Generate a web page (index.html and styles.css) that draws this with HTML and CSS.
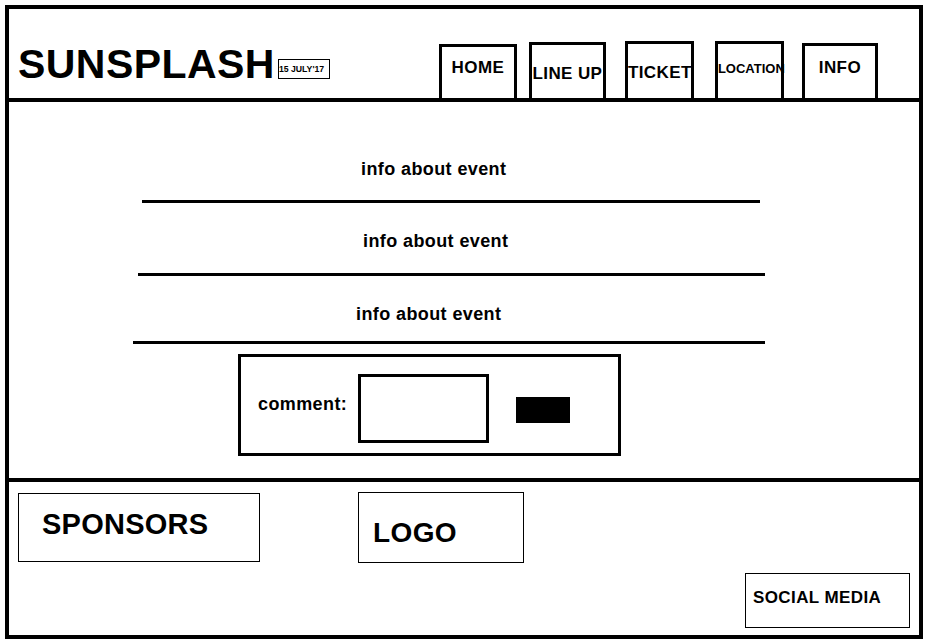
FILE: index.html
```html
<!doctype html>
<html lang="en">
    <head>
        <meta charset="utf-8">
        <title>Sunsplash</title>
        <meta name="viewport" content="width=device-width, initial-scale=1">
        <link rel="stylesheet" href="styles.css">
    </head>
    <body>
        <div class="frame">
            <header class="header">
                <div class="brand">
                    <h1 class="brand-title">SUNSPLASH</h1>
                    <div class="brand-date">15 JULY'17</div>
                </div>

                <nav class="nav">
                    <a class="nav-item nav-home" href="#">HOME</a>
                    <a class="nav-item nav-lineup" href="#">LINE UP</a>
                    <a class="nav-item nav-ticket" href="#">TICKET</a>
                    <a class="nav-item nav-location" href="#">LOCATION</a>
                    <a class="nav-item nav-info" href="#">INFO</a>
                </nav>
            </header>

            <main class="main">
                <section class="info info-1">
                    <p class="info-text">info about event</p>
                    <div class="info-rule"></div>
                </section>

                <section class="info info-2">
                    <p class="info-text">info about event</p>
                    <div class="info-rule"></div>
                </section>

                <section class="info info-3">
                    <p class="info-text">info about event</p>
                    <div class="info-rule"></div>
                </section>

                <form class="comment">
                    <label class="comment-label" for="comment">comment:</label>
                    <textarea class="comment-input" id="comment"></textarea>
                    <button class="comment-send" type="button"></button>
                </form>
            </main>

            <footer class="footer">
                <div class="footer-row">
                    <div class="sponsors">SPONSORS</div>
                    <div class="logo">LOGO</div>
                </div>
                <div class="social">SOCIAL MEDIA</div>
            </footer>
        </div>
    </body>
</html>
```

FILE: styles.css
```css
* {
    box-sizing: border-box;
}

body {
    margin: 0;
    background-color: #fff;
    color: #000;
    font-family: "Liberation Sans", Arial, sans-serif;
    font-weight: bold;
    letter-spacing: 0.4px;
}

.frame {
    display: flex;
    flex-direction: column;
    width: 918px;
    height: 634px;
    margin: 5px 0 0 5px;
    border: 4px solid #000;
}

/* header */

.header {
    display: flex;
    align-items: flex-end;
    height: 93px;
    border-bottom: 4px solid #000;
}

.brand {
    display: flex;
    align-items: flex-end;
    margin: 0 0 13px 9px;
}

.brand-title {
    margin: 0;
    font-size: 41px;
    line-height: 41px;
    letter-spacing: 0.45px;
}

.brand-date {
    display: flex;
    align-items: center;
    width: 52px;
    height: 20px;
    margin: 0 0 6px 3px;
    border: 1px solid #000;
    font-size: 8.7px;
    letter-spacing: 0;
    white-space: nowrap;
}

.nav {
    display: flex;
    align-items: flex-end;
    margin-left: 109px;
}

.nav-item {
    display: block;
    border: 3px solid #000;
    border-bottom: 0;
    color: #000;
    text-decoration: none;
    text-align: center;
    font-size: 17px;
    line-height: 20px;
    white-space: nowrap;
}

.nav-home {
    width: 78px;
    height: 54px;
    padding-top: 11px;
    margin-right: 12px;
}

.nav-lineup {
    width: 77px;
    height: 56px;
    padding-top: 19px;
    margin-right: 19px;
}

.nav-ticket {
    width: 69px;
    height: 57px;
    padding-top: 19px;
    margin-right: 21px;
}

.nav-location {
    width: 69px;
    height: 57px;
    padding-top: 15px;
    margin-right: 18px;
    font-size: 13px;
    letter-spacing: 0;
    text-align: left;
}

.nav-info {
    width: 76px;
    height: 55px;
    padding-top: 12px;
}

/* main */

.main {
    height: 380px;
    padding-top: 29px;
    border-bottom: 4px solid #000;
}

.info-text {
    margin: 27px 0 0;
    font-size: 18px;
    line-height: 22px;
}

.info-rule {
    height: 3px;
    background-color: #000;
}

.info-1 .info-text {
    margin-left: 352px;
}

.info-1 .info-rule {
    width: 618px;
    margin: 20px 0 0 133px;
}

.info-2 .info-text {
    margin-left: 354px;
}

.info-2 .info-rule {
    width: 627px;
    margin: 21px 0 0 129px;
}

.info-3 .info-text {
    margin-left: 347px;
}

.info-3 .info-rule {
    width: 632px;
    margin: 16px 0 0 124px;
}

.comment {
    display: flex;
    align-items: flex-start;
    width: 383px;
    height: 102px;
    margin: 10px 0 0 229px;
    border: 3px solid #000;
}

.comment-label {
    margin: 36px 0 0 17px;
    font-size: 18px;
    line-height: 22px;
}

.comment-input {
    width: 131px;
    height: 69px;
    margin: 17px 0 0 11px;
    padding: 0;
    border: 3px solid #000;
    resize: none;
}

.comment-send {
    width: 54px;
    height: 26px;
    margin: 40px 0 0 27px;
    padding: 0;
    border: 0;
    background-color: #000;
}

/* footer */

.footer {
    display: flex;
    flex-direction: column;
    flex: 1;
}

.footer-row {
    display: flex;
    align-items: flex-start;
}

.sponsors {
    width: 242px;
    height: 69px;
    margin: 11px 0 0 9px;
    padding: 16px 0 0 23px;
    border: 1px solid #000;
    font-size: 29px;
    line-height: 29px;
    letter-spacing: 0.25px;
}

.logo {
    width: 166px;
    height: 71px;
    margin: 10px 0 0 98px;
    padding: 26px 0 0 14px;
    border: 1px solid #000;
    font-size: 28px;
    line-height: 28px;
}

.social {
    align-self: flex-end;
    width: 165px;
    height: 55px;
    margin: 10px 9px 0 0;
    padding: 14px 0 0 7px;
    border: 1px solid #000;
    font-size: 17px;
    line-height: 20px;
    white-space: nowrap;
}
```
